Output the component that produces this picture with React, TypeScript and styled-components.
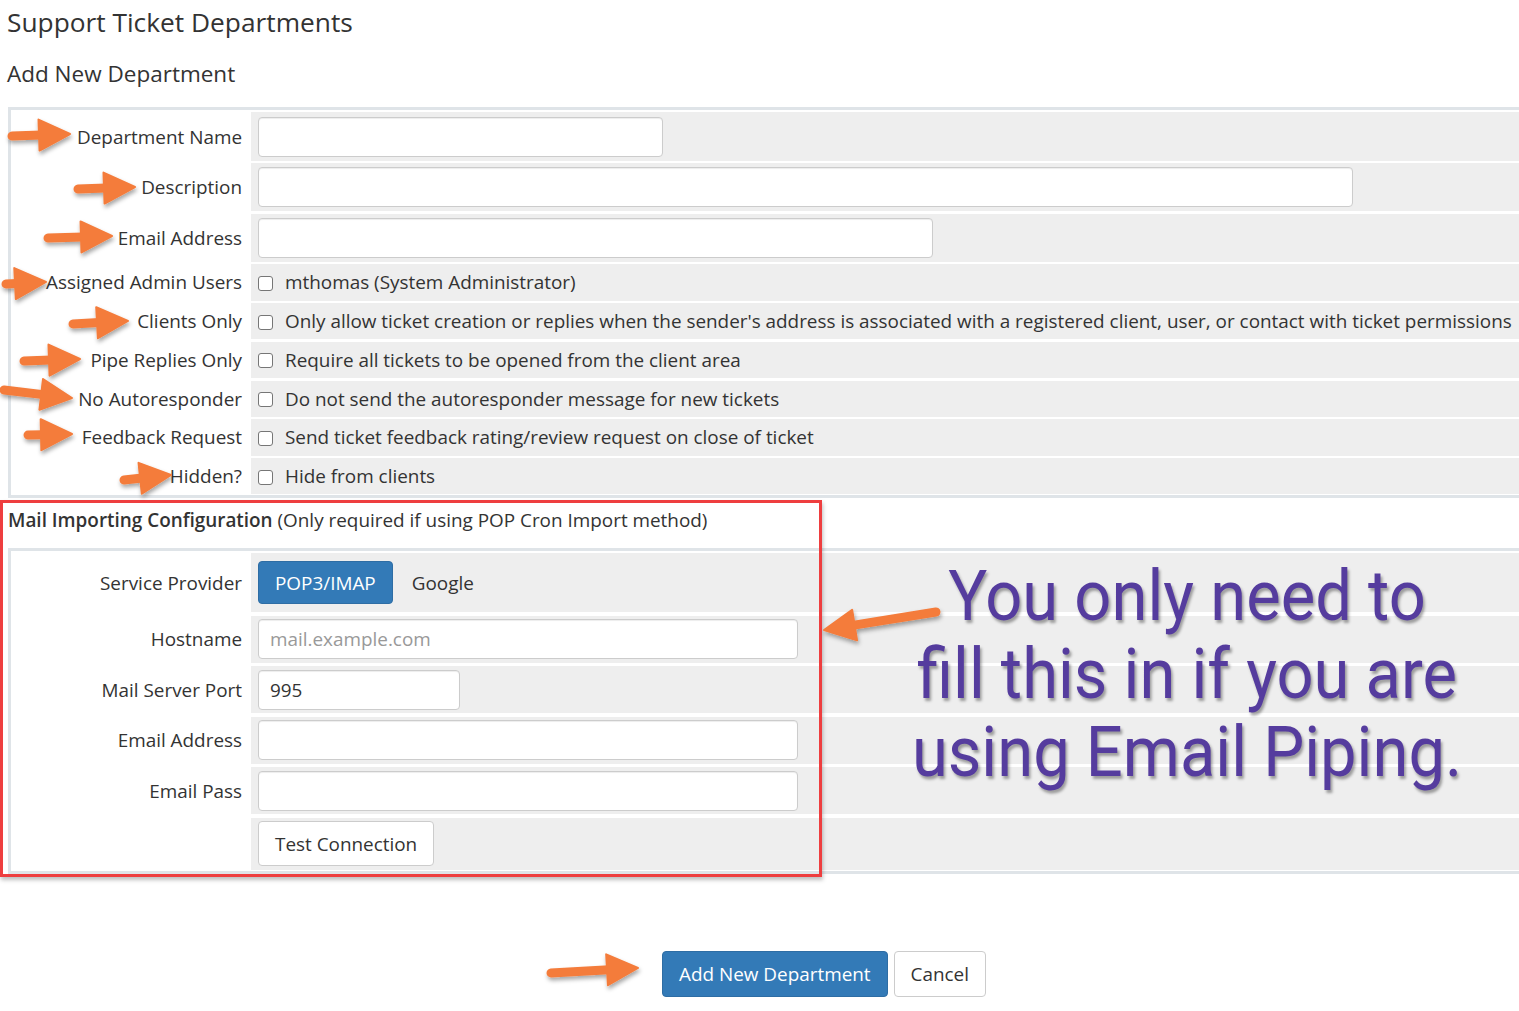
import React from 'react'
import styled, {createGlobalStyle} from 'styled-components'

const GlobalStyle = createGlobalStyle`
  html, body {
    margin: 0;
    padding: 0;
    background: #fff;
    overflow: hidden;
  }
  body {
    font-family: "Open Sans", "Noto Sans", sans-serif;
    color: #333;
  }
`

const BASE = 18.9

const Page = styled.div`
  position: relative;
  width: 1640px;
  padding: 0 0 0 8px;
  box-sizing: border-box;
`

const Title = styled.h1`
  margin: 0 0 0 -1px;
  padding-top: 6px;
  font-size: 26.3px;
  font-weight: 400;
  line-height: 32px;
  color: #333;
`

const SubTitle = styled.h2`
  margin: 21px 0 0 -1px;
  font-size: 22.5px;
  font-weight: 400;
  line-height: 30px;
  color: #333;
`

const FormTable = styled.div<{$gap: number; $top: number}>`
  margin-top: ${p => p.$top}px;
  display: grid;
  grid-template-columns: 239px 1fr;
  column-gap: 1px;
  row-gap: ${p => p.$gap}px;
  border: 3px solid #dfe4e8;
  border-right: none;
  padding: 2px 0 1px;
  background: #fff;
`

const Label = styled.div`
  display: flex;
  align-items: center;
  justify-content: flex-end;
  padding-right: 8px;
  font-size: ${BASE}px;
  white-space: nowrap;
  color: #333;
`

const Field = styled.div<{$pad: number; $h?: number}>`
  display: flex;
  align-items: center;
  background: #eee;
  padding: ${p => p.$pad}px 7px;
  min-height: ${p => p.$h ?? 0}px;
  box-sizing: border-box;
  font-size: ${BASE}px;
  white-space: nowrap;
`

const TextInput = styled.input<{$w: number}>`
  width: ${p => p.$w}px;
  height: 40px;
  box-sizing: border-box;
  border: 1px solid #ccc;
  border-radius: 4px;
  background: #fff;
  padding: 0 11px;
  font-family: inherit;
  font-size: ${BASE}px;
  color: #333;
  box-shadow: inset 0 1px 1px rgba(0, 0, 0, 0.075);
  outline: none;

  &::placeholder {
    color: #999;
  }
`

const Check = styled.input.attrs({type: 'checkbox'})`
  appearance: none;
  margin: 2px 12px 0 0;
  width: 15px;
  height: 15px;
  border: 1.5px solid #767676;
  border-radius: 3px;
  background: #fff;
  flex: none;
`

const SectionHeading = styled.div`
  margin-top: 8px;
  font-size: ${BASE}px;
  line-height: 28px;

  strong {
    font-weight: 600;
  }
`

const Button = styled.button<{$primary?: boolean; $h: number}>`
  height: ${p => p.$h}px;
  padding: 0 16px;
  border-radius: 4px;
  border: 1px solid ${p => (p.$primary ? '#2e6da4' : '#ccc')};
  background: ${p => (p.$primary ? '#337ab7' : '#fff')};
  color: ${p => (p.$primary ? '#fff' : '#333')};
  font-family: inherit;
  font-size: ${BASE}px;
  cursor: pointer;
`

const LinkTab = styled.span`
  margin-left: 19px;
  font-size: ${BASE}px;
  color: #333;
`

const ActionBar = styled.div`
  display: flex;
  justify-content: center;
  gap: 6px;
  margin-top: 77px;
`

// callout overlays drawn on top of the form
const Callout = styled.div`
  position: absolute;
  left: 0;
  top: 500px;
  width: 822px;
  height: 377px;
  box-sizing: border-box;
  border: 3px solid #ee3e3f;
  box-shadow: 1px 3px 4px rgba(0, 0, 0, 0.25);
  pointer-events: none;
`

const Note = styled.div`
  position: absolute;
  left: 887px;
  top: 557px;
  width: 600px;
  text-align: center;
  font-family: Roboto, "Liberation Sans", sans-serif;
  font-size: 70px;
  line-height: 78px;
  color: #553c9e;
  text-shadow: 2px 3px 3px rgba(0, 0, 0, 0.35);
  transform: scaleX(0.93);
  transform-origin: center;
`

const ArrowLayer = styled.svg`
  position: absolute;
  left: 0;
  top: 0;
  width: 1519px;
  height: 1011px;
  pointer-events: none;
  overflow: visible;
`

type Pt = [number, number]

const arrows: [Pt, Pt][] = [
  [[12, 136], [70, 134]],
  [[78, 189], [135, 187]],
  [[48, 238], [112, 236]],
  [[6, 284], [46, 282]],
  [[73, 324], [128, 321]],
  [[24, 361], [80, 359]],
  [[4, 390], [72, 398]],
  [[28, 435], [72, 434]],
  [[124, 480], [171, 475]],
  [[936, 612], [824, 630]],
  [[551, 973], [638, 968]],
]

function Arrow({from, to}: {from: Pt; to: Pt}) {
  const [x1, y1] = from
  const [x2, y2] = to
  const len = Math.hypot(x2 - x1, y2 - y1)
  const ux = (x2 - x1) / len
  const uy = (y2 - y1) / len
  const head = 31
  const half = 15.5
  const bx = x2 - ux * head
  const by = y2 - uy * head
  const px = -uy
  const py = ux
  const tri = `${x2},${y2} ${bx + px * half},${by + py * half} ${bx - px * half},${by - py * half}`
  return (
    <g filter="url(#arrowShadow)">
      <line x1={x1} y1={y1} x2={bx + ux * 2} y2={by + uy * 2} stroke="#f47c3b" strokeWidth={9} strokeLinecap="round" />
      <polygon points={tri} fill="#f47c3b" stroke="#f47c3b" strokeWidth={2} strokeLinejoin="round" />
    </g>
  )
}

export default function App() {
  return (
    <>
      <GlobalStyle />
      <Page>
        <Title>Support Ticket Departments</Title>
        <SubTitle>Add New Department</SubTitle>

        <FormTable $gap={2.4} $top={18}>
          <Label>Department Name</Label>
          <Field $pad={4.5}><TextInput $w={405} /></Field>
          <Label>Description</Label>
          <Field $pad={4}><TextInput $w={1095} /></Field>
          <Label>Email Address</Label>
          <Field $pad={4}><TextInput $w={675} /></Field>
          <Label>Assigned Admin Users</Label>
          <Field $pad={0} $h={36.4}><Check />mthomas (System Administrator)</Field>
          <Label>Clients Only</Label>
          <Field $pad={0} $h={36.4}><Check />Only allow ticket creation or replies when the sender's address is associated with a registered client, user, or contact with ticket permissions</Field>
          <Label>Pipe Replies Only</Label>
          <Field $pad={0} $h={36.4}><Check />Require all tickets to be opened from the client area</Field>
          <Label>No Autoresponder</Label>
          <Field $pad={0} $h={36.4}><Check />Do not send the autoresponder message for new tickets</Field>
          <Label>Feedback Request</Label>
          <Field $pad={0} $h={36.4}><Check />Send ticket feedback rating/review request on close of ticket</Field>
          <Label>Hidden?</Label>
          <Field $pad={0} $h={36.4}><Check />Hide from clients</Field>
        </FormTable>

        <SectionHeading>
          <strong>Mail Importing Configuration</strong> (Only required if using POP Cron Import method)
        </SectionHeading>

        <FormTable $gap={3.5} $top={14}>
          <Label>Service Provider</Label>
          <Field $pad={8}>
            <Button $primary $h={43}>POP3/IMAP</Button>
            <LinkTab>Google</LinkTab>
          </Field>
          <Label>Hostname</Label>
          <Field $pad={3.5}><TextInput $w={540} placeholder="mail.example.com" /></Field>
          <Label>Mail Server Port</Label>
          <Field $pad={3.5}><TextInput $w={202} defaultValue="995" /></Field>
          <Label>Email Address</Label>
          <Field $pad={3.5}><TextInput $w={540} /></Field>
          <Label>Email Pass</Label>
          <Field $pad={3.5}><TextInput $w={540} /></Field>
          <Label />
          <Field $pad={3.5}><Button $h={45}>Test Connection</Button></Field>
        </FormTable>

        <ActionBar>
          <Button $primary $h={46}>Add New Department</Button>
          <Button $h={46}>Cancel</Button>
        </ActionBar>

        <Callout />
        <Note>
          You only need to<br />
          fill this in if you are<br />
          using Email Piping.
        </Note>
        <ArrowLayer>
          <defs>
            <filter id="arrowShadow" x="-20%" y="-50%" width="140%" height="200%">
              <feDropShadow dx="1" dy="3" stdDeviation="2" floodColor="#000" floodOpacity="0.35" />
            </filter>
          </defs>
          {arrows.map(([a, b], i) => (
            <Arrow key={i} from={a} to={b} />
          ))}
        </ArrowLayer>
      </Page>
    </>
  )
}
